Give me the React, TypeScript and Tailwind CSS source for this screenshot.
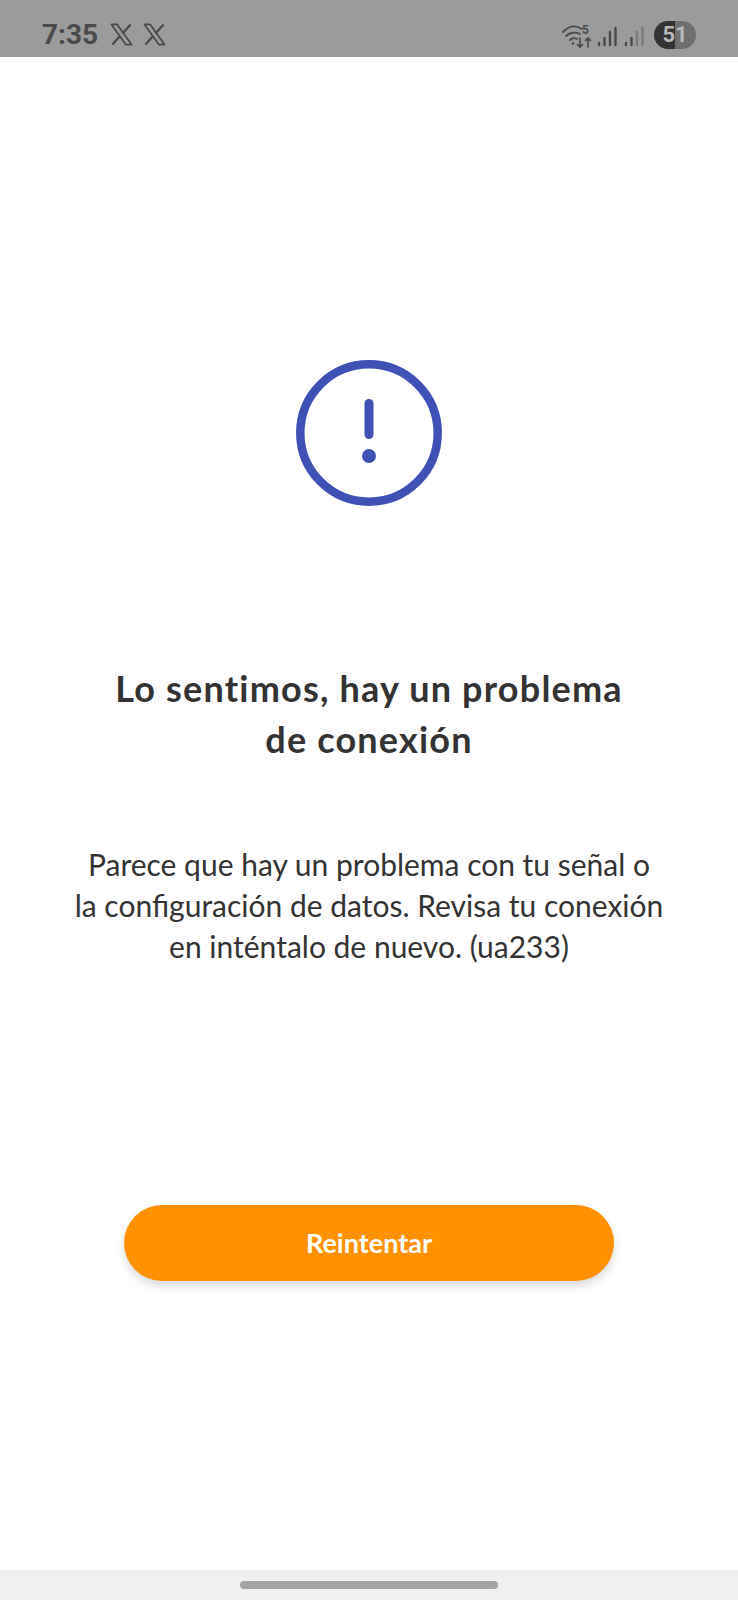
function XLogo() {
  return (
    <svg width="23" height="23" viewBox="0 0 24 24" fill="none" stroke="#4a4a4a" strokeWidth="1.800" strokeLinejoin="round">
      <path d="M1.500 1.500h6l15 21h-6z" />
      <path d="M21.500 1.500l-8.500 9.500M10.500 13.500L2.500 22.500" strokeWidth="2.300" />
    </svg>
  );
}

// wifi fan with the "5" badge and the up/down arrows
function WifiIcon() {
  return (
    <svg className="mt-[3px]" width="30" height="26" viewBox="0 0 30 26" fill="none" stroke="#4a4a4a" strokeLinecap="round">
      <path d="M1 9C7 3 14 2 20 6" strokeWidth="1.800" />
      <path d="M4 13c4-4 10-4 14-2" strokeWidth="1.800" />
      <path d="M8 17c2-2 5-2 7-1" strokeWidth="1.800" />
      <circle cx="11" cy="20.500" r="1.300" fill="#4a4a4a" stroke="none" />
      <text x="20" y="11" fontSize="12" fontWeight="700" fill="#4a4a4a" stroke="none" fontFamily="Roboto, sans-serif">5</text>
      <path d="M18 15v9M15.500 21.500l2.500 2.500 2.500-2.500M26 24v-9M23.500 17.500l2.500-2.500 2.500 2.500" strokeWidth="1.700" />
    </svg>
  );
}

function Signal({ faded }: { faded?: boolean }) {
  const tail = faded ? "#7c7c7c" : "#4a4a4a";
  return (
    <svg width="20" height="26" viewBox="0 0 20 26" fill="none" strokeLinecap="round" strokeWidth="2.400">
      <path d="M2 23v-2M7.500 23v-7" stroke="#4a4a4a" />
      <path d="M13 23V10M18.500 23V6" stroke={tail} />
    </svg>
  );
}

export default function App() {
  return (
    <div className="flex h-[1600px] w-[738px] flex-col bg-white [font-family:Lato,'Noto_Sans',sans-serif]">
      <header className="flex h-[57px] items-center justify-between bg-[#9b9b9b] pl-[42px] pr-[42px] pt-[12px]">
        <div className="flex items-center gap-[10px]">
          <span className="mr-[2px] text-[28px] font-bold leading-none text-[#4a4a4a] [font-family:Roboto,sans-serif]">7:35</span>
          <XLogo />
          <XLogo />
        </div>
        <div className="flex items-center">
          <WifiIcon />
          <span className="w-[5px]" />
          <Signal />
          <span className="w-[7px]" />
          <Signal faded />
          <span className="w-[10px]" />
          <div className="flex h-[28px] w-[42px] items-center justify-center rounded-full bg-[linear-gradient(90deg,#333333_0%,#333333_50%,#6f6f6f_50%,#6f6f6f_100%)] text-[22px] font-bold text-[#b8b8b8] [font-family:Roboto,sans-serif]">
            51
          </div>
        </div>
      </header>

      <main className="flex flex-1 flex-col items-center">
        <svg className="mt-[303px]" width="146" height="146" viewBox="0 0 146 146" fill="none">
          <circle cx="73" cy="73" r="68.700" stroke="#3f51b5" strokeWidth="8.500" />
          <path d="M73 43.500v31" stroke="#3f51b5" strokeWidth="9" strokeLinecap="round" />
          <circle cx="73" cy="96" r="7" fill="#3f51b5" />
        </svg>

        <h1 className="mt-[157px] text-center text-[36px] font-bold leading-[51px] tracking-[1.2px] text-[#333333]">
          Lo sentimos, hay un problema
          <br />
          de conexión
        </h1>

        <p className="mt-[79px] text-center text-[30px] leading-[41px] text-[#333333]">
          Parece que hay un problema con tu señal o
          <br />
          la configuración de datos. Revisa tu conexión
          <br />
          en inténtalo de nuevo. (ua233)
        </p>

        <button className="mt-[238px] h-[76px] w-[490px] rounded-full bg-[#ff9100] text-[27px] font-bold text-white shadow-[0_5px_10px_rgba(0,0,0,0.15)]">
          Reintentar
        </button>
      </main>

      <footer className="flex h-[30px] items-start justify-center bg-[#f0f0f2] pt-[11px]">
        <div className="h-[8px] w-[258px] rounded-full bg-[#a3a3a3]" />
      </footer>
    </div>
  );
}
